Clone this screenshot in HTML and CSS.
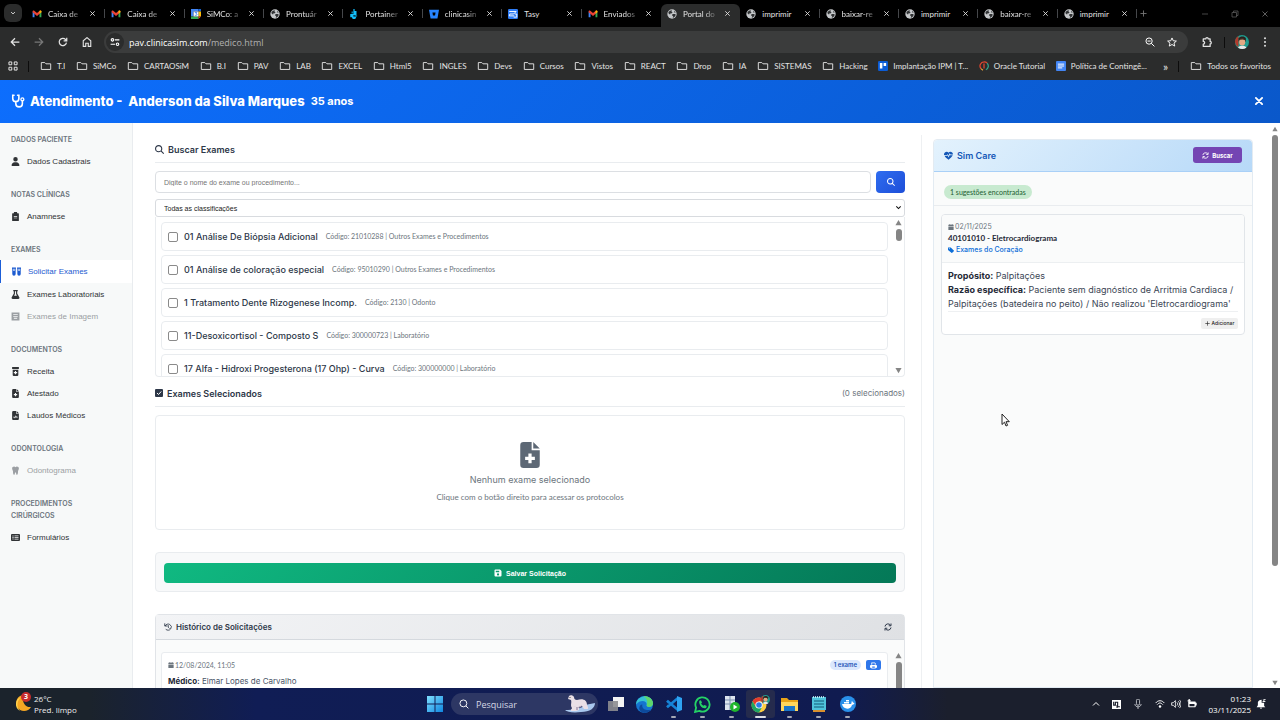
FILE: index.html
```html
<!DOCTYPE html>
<html lang="pt-BR">
<head>
<meta charset="utf-8">
<meta name="viewport" content="width=device-width, initial-scale=1">
<title>Portal do Médico</title>
<link rel="stylesheet" href="styles.css">
</head>
<body>
<svg class="sprite" aria-hidden="true">
  <symbol id="i-gmail" viewBox="0 0 16 16"><path fill="#4285f4" d="M1 4v9h3V7z"/><path fill="#34a853" d="M12 7v6h3V4z"/><path fill="#ea4335" d="M1 3.500C1 2 3 2 4 3l4 3.500L12 3c1-1 3-1 3 .5V5l-7 6-7-6z"/><path fill="#fbbc04" d="M12 3c1-1 3-1 3 .5V5l-3 2.500z"/></symbol>
  <symbol id="i-calendar-app" viewBox="0 0 16 16"><path fill="#4285f4" d="M0 0h12v4H4v8H0z"/><path fill="#1967d2" d="M12 0h4v4h-4z"/><path fill="#fbbc04" d="M12 4h4v8h-4z"/><path fill="#34a853" d="M0 12h12v4H0z"/><path fill="#ea4335" d="M12 12h4l-4 4z"/><path fill="#fff" d="M4 4h8v8H4z"/><path fill="none" stroke="#4285f4" stroke-width="1.500" d="M6 5.500h3.500L8 7.500c3 0 2 3.500-2 2.500"/></symbol>
  <symbol id="i-globe" viewBox="0 0 16 16"><circle cx="8" cy="8" r="7.500" fill="#c4c7c9"/><path fill="#303234" d="M2 6.500C3 3.500 5 2 8 2L7 4l2 1-2 2-2 0 0 2zM9 14l1-2-2-2 1-2 4 0 1 1c-.5 2.500-2.500 4.500-5 5zM12 3l2 3-3-1z"/></symbol>
  <symbol id="i-portainer" viewBox="0 0 16 16"><path fill="#13bef9" d="M7 0h2v3h3v7H7zM2 8h5v5H2zM4 12h8l-2 4H6z"/><path fill="#0a7ea6" d="M4 4h3v3H4zM9 10h4v2H9z"/></symbol>
  <symbol id="i-bitbucket" viewBox="0 0 16 16"><path fill="#2684ff" fill-rule="evenodd" d="M0 1h16l-2.500 14h-11zM5.500 5.500l.8 5h3.400l.8-5z"/></symbol>
  <symbol id="i-tasy" viewBox="0 0 16 16"><rect width="16" height="16" rx="2" fill="#2f7df6"/><path fill="none" stroke="#fff" stroke-width="1.500" d="M2 4h11L9 8H3l-1 3h8M9 13h5V8h-3"/></symbol>
  <symbol id="i-x" viewBox="0 0 16 16"><path fill="none" stroke="currentColor" stroke-width="2" d="M3 3l10 10M13 3L3 13"/></symbol>
  <symbol id="i-xb" viewBox="0 0 16 16"><path fill="none" stroke="currentColor" stroke-width="3" stroke-linecap="round" d="M3 3l10 10M13 3L3 13"/></symbol>
  <symbol id="i-chev" viewBox="0 0 16 16"><path fill="none" stroke="currentColor" stroke-width="2.500" d="M3 5.500l5 5 5-5"/></symbol>
  <symbol id="i-plus" viewBox="0 0 16 16"><path fill="none" stroke="currentColor" stroke-width="2" d="M8 1v14M1 8h14"/></symbol>
  <symbol id="i-min" viewBox="0 0 16 16"><path stroke="currentColor" stroke-width="1.500" d="M2 8h12"/></symbol>
  <symbol id="i-restore" viewBox="0 0 16 16"><path fill="none" stroke="currentColor" stroke-width="1.500" d="M2 5h9v9H2zM5 5V2h9v9h-3"/></symbol>
  <symbol id="i-left" viewBox="0 0 16 16"><path fill="none" stroke="currentColor" stroke-width="2" d="M15 8H2M8 2L2 8l6 6"/></symbol>
  <symbol id="i-right" viewBox="0 0 16 16"><path fill="none" stroke="currentColor" stroke-width="2" d="M1 8h13M8 2l6 6-6 6"/></symbol>
  <symbol id="i-reload" viewBox="0 0 16 16"><path fill="none" stroke="currentColor" stroke-width="2" d="M13.500 9A5.800 5.800 0 1 1 12 4l2 2M14 1v5H9"/></symbol>
  <symbol id="i-home" viewBox="0 0 16 16"><path fill="none" stroke="currentColor" stroke-width="1.800" d="M2 15V6l6-5 6 5v9h-4v-5H6v5z"/></symbol>
  <symbol id="i-tune" viewBox="0 0 16 16"><g fill="none" stroke="currentColor" stroke-width="1.800"><circle cx="4" cy="4.500" r="2"/><path d="M8 4.500h7M1 11.500h7"/><circle cx="12" cy="11.500" r="2"/></g></symbol>
  <symbol id="i-zoomout" viewBox="0 0 16 16"><path fill="none" stroke="currentColor" stroke-width="1.600" d="M10 10l5 5M4 6.500h5"/><circle cx="6.500" cy="6.500" r="5" fill="none" stroke="currentColor" stroke-width="1.600"/></symbol>
  <symbol id="i-star" viewBox="0 0 16 16"><path fill="none" stroke="currentColor" stroke-width="1.500" stroke-linejoin="round" d="M8 1.500l2 4.500 5 .5-3.800 3.300 1.200 4.700L8 12l-4.400 2.500 1.200-4.700L1 6.500 6 6z"/></symbol>
  <symbol id="i-puzzle" viewBox="0 0 16 16"><path fill="none" stroke="currentColor" stroke-width="2" stroke-linejoin="round" d="M2 3h4c0-2.500 4-2.500 4 0h3v4c2.500 0 2.500 4 0 4v4H2v-3.500c3 0 3-4.500 0-4.500z"/></symbol>
  <symbol id="i-face" viewBox="0 0 16 16"><circle cx="8" cy="8" r="8" fill="#1f9c8f"/><path fill="#b13a2c" d="M0 8a8 8 0 0 1 4-6.900V14A8 8 0 0 1 0 8z"/><path fill="#2b211d" d="M4 7V4c2-3 7-3 8.500 0l-.5 4z"/><ellipse cx="8.200" cy="8" rx="3.500" ry="4" fill="#e3a883"/><path fill="#2b211d" d="M4.500 5.500C6 3 11 3 12 6L9 5z"/><path fill="#e8e8e8" d="M3.500 14.500c1-3 8.500-3 9.500 0-3 2-6.500 2-9.500 0z"/></symbol>
  <symbol id="i-dots" viewBox="0 0 16 16"><g fill="currentColor"><circle cx="8" cy="2" r="1.600"/><circle cx="8" cy="8" r="1.600"/><circle cx="8" cy="14" r="1.600"/></g></symbol>
  <symbol id="i-apps" viewBox="0 0 16 16"><path fill="none" stroke="currentColor" stroke-width="1.600" d="M1.500 1.500h4.500v4.500H1.500zM10 1.500h4.500v4.500H10zM1.500 10h4.500v4.500H1.500zM10 10h4.500v4.500H10z"/></symbol>
  <symbol id="i-folder" viewBox="0 0 18 16"><path fill="none" stroke="currentColor" stroke-width="1.500" stroke-linejoin="round" d="M1.500 2.500H7l2 2h7.500v9h-15z"/></symbol>
  <symbol id="i-trello" viewBox="0 0 16 16"><rect width="16" height="16" rx="2" fill="#0b5cd6"/><path fill="#fff" d="M3 3h4v9H3zM9 3h4v5H9z"/></symbol>
  <symbol id="i-oracle" viewBox="0 0 16 16"><g fill="none" stroke-width="2"><path stroke="#e0452f" d="M3 12A6.500 6.500 0 0 1 8 1.500a6.500 6.500 0 0 1 5 2"/><path stroke="#2fa58c" d="M13 3.500a6.500 6.500 0 0 1-2 10.500"/><path stroke="#e8a33a" d="M3 12c1 1.500 2 2 3.500 2.500"/><path stroke="#e0452f" d="M8 4v8"/></g></symbol>
  <symbol id="i-doc" viewBox="0 0 16 16"><rect width="16" height="16" rx="1.500" fill="#4285f4"/><path stroke="#fff" stroke-width="1.600" d="M3 5h10M3 8h10M3 11h7"/></symbol>

  <symbol id="i-steth" viewBox="0 0 16 16"><path fill="none" stroke="currentColor" stroke-width="1.800" stroke-linecap="round" d="M3.500 1.500H2V5c0 5 7 5 7 0V1.500H7.500M5.500 9v2c0 5 7.500 5 7.500 0V8"/><circle cx="13" cy="6.200" r="1.700" fill="none" stroke="currentColor" stroke-width="1.500"/></symbol>
  <symbol id="i-user" viewBox="0 0 448 512"><path fill="currentColor" d="M224 256A128 128 0 1 0 224 0a128 128 0 1 0 0 256zm-45.700 48C79.800 304 0 383.800 0 482.300C0 498.700 13.300 512 29.700 512H418.300c16.400 0 29.700-13.300 29.700-29.700C448 383.800 368.200 304 269.700 304H178.300z"/></symbol>
  <symbol id="i-clip" viewBox="0 0 16 16"><path fill="currentColor" fill-rule="evenodd" d="M5 2a3 3 0 0 1 6 0h2q1 0 1 1v12q0 1-1 1H3q-1 0-1-1V3q0-1 1-1zM5 7v1.300h6V7zM5 10v1.300h6V10z"/></symbol>
  <symbol id="i-vials" viewBox="0 0 16 16"><path fill="currentColor" fill-rule="evenodd" d="M0 1h7v2H6.500v9.500a3 3 0 0 1-6 0V3H0zM2.500 3v4h2V3zM9 1h7v2h-.5v9.500a3 3 0 0 1-6 0V3H9zM11.500 3v4h2V3z"/></symbol>
  <symbol id="i-flask" viewBox="0 0 16 16"><path fill="currentColor" fill-rule="evenodd" d="M4 0h8v2h-1v4l4 7.500Q15.500 16 13 16H3Q.5 16 1 13.500L5 6V2H4zM7 2v5l-1.500 3h5L9 7V2z"/></symbol>
  <symbol id="i-xray" viewBox="0 0 16 16"><path fill="currentColor" fill-rule="evenodd" d="M1 1h14v14H1zM4 4v1.300h8V4zM4 7v1.300h8V7zM5 10v2h6v-2z"/></symbol>
  <symbol id="i-bottle" viewBox="0 0 16 16"><path fill="currentColor" fill-rule="evenodd" d="M2 0h12v3.500H2zM3 5h10v9q0 2-2 2H5q-2 0-2-2zM7 7v2H5v2h2v2h2v-2h2V9H9V7z"/></symbol>
  <symbol id="i-filemed" viewBox="0 0 12 16"><path fill="currentColor" fill-rule="evenodd" d="M2 0h5v5h5v9q0 2-2 2H2q-2 0-2-2V2Q0 0 2 0zM8 0l4 4H8zM5 7v2H3v2h2v2h2v-2h2V9H7V7z"/></symbol>
  <symbol id="i-filewave" viewBox="0 0 12 16"><path fill="currentColor" fill-rule="evenodd" d="M2 0h5v5h5v9q0 2-2 2H2q-2 0-2-2V2Q0 0 2 0zM8 0l4 4H8zM2 10v1.500h2l1 2 1.500-3 .5 1h3V10H8L6.500 7.500 5 11l-.5-1z"/></symbol>
  <symbol id="i-tooth" viewBox="0 0 16 16"><path fill="currentColor" d="M8 2c2-2 6-1 6 2.500 0 2-1.500 3.500-1.500 5 0 3-.5 6.500-2 6.500S9.500 11 8 11s-1 5-2.500 5-2-3.500-2-6.500c0-1.500-1.500-3-1.500-5C2 1 6 0 8 2z"/></symbol>
  <symbol id="i-form" viewBox="0 0 18 16"><path fill="currentColor" fill-rule="evenodd" d="M2 1h14q2 0 2 2v10q0 2-2 2H2q-2 0-2-2V3q0-2 2-2zM3 4v2h2V4zM7 4v1.500h8V4zM3 7v2h2V7zM7 7.300v1.500h8V7.300zM3 10v2h2v-2zM7 10.500V12h8v-1.500z"/></symbol>
  <symbol id="i-search" viewBox="0 0 512 512"><path fill="currentColor" d="M416 208c0 45.900-14.900 88.300-40 122.700L502.600 457.400c12.500 12.500 12.500 32.800 0 45.300s-32.800 12.500-45.300 0L330.700 376c-34.400 25.200-76.800 40-122.700 40C93.100 416 0 322.900 0 208S93.100 0 208 0S416 93.100 416 208zM208 352a144 144 0 1 0 0-288 144 144 0 1 0 0 288z"/></symbol>
  <symbol id="i-check" viewBox="0 0 16 16"><rect width="16" height="16" rx="2" fill="currentColor"/><path fill="none" stroke="#fff" stroke-width="2" stroke-linecap="round" stroke-linejoin="round" d="M4.500 8.500L7 11l5-5.500"/></symbol>
  <symbol id="i-save" viewBox="0 0 16 16"><path fill="currentColor" fill-rule="evenodd" d="M3 1h9l3 3v9q0 2-2 2H3q-2 0-2-2V3q0-2 2-2zM3.500 3.500v3h7v-3zM8 8.500a2.200 2.200 0 1 0 .1 0z"/></symbol>
  <symbol id="i-history" viewBox="0 0 16 16"><path fill="none" stroke="currentColor" stroke-width="1.700" stroke-linecap="round" d="M2.500 5.500A6.300 6.300 0 1 1 4 13M1.500 1.500v4.500H6M8.500 5v3.500l2 2"/></symbol>
  <symbol id="i-sync" viewBox="0 0 16 16"><path fill="none" stroke="currentColor" stroke-width="2" d="M2 7a6 6 0 0 1 11-2.500M14 9A6 6 0 0 1 3 11.500M14 1v4.500H9.500M2 15v-4.500h4.500"/></symbol>
  <symbol id="i-heart" viewBox="0 0 16 16"><path fill="currentColor" d="M8 3c2-3 8-2 8 3H11.500L10 4 8 8.500 6.500 5.500 5.500 7H0C-.500 1 6-.500 8 3zM1 8.500h5.200l.4-.8L8 11.500 10.300 7l.5.700H15.500C14 11 10.500 13.500 8 15.500 5.500 13.500 2.300 11.500 1 8.500z"/></symbol>
  <symbol id="i-cal" viewBox="0 0 14 16"><path fill="currentColor" d="M3 0h2v2h4V0h2v2h3v3.500H0V2h3zM0 6.500h14V16H0z"/></symbol>
  <symbol id="i-tag" viewBox="0 0 16 16"><path fill="currentColor" fill-rule="evenodd" d="M0 1h7.500L15.500 9q1 1 0 2l-4.300 4.500q-1 1-2 0L0 8zM3.500 3a1.300 1.300 0 1 0 .1 0z"/></symbol>
  <symbol id="i-print" viewBox="0 0 16 16"><path fill="currentColor" fill-rule="evenodd" d="M3 1h8l2 2v3h-2V3H5v3H3zM2 7h12q2 0 2 2v4h-3v2H3v-2H0V9q0-2 2-2zM5 10.500V13h6v-2.500z"/></symbol>
  <symbol id="i-up" viewBox="0 0 16 16"><path fill="currentColor" d="M8 2l7 12H1z"/></symbol>
  <symbol id="i-down" viewBox="0 0 16 16"><path fill="currentColor" d="M8 14L1 2h14z"/></symbol>
</svg>

<header class="browser">
  <div class="tabstrip">
    <button class="tabsearch" aria-label="Pesquisar guias"><svg class="ic s6"><use href="#i-chev"/></svg></button>
    <div class="tabs">
      <div class="tab"><svg class="ic s10"><use href="#i-gmail"/></svg><span class="fade">Caixa de</span><svg class="ic s7"><use href="#i-x"/></svg></div>
      <div class="tab"><svg class="ic s10"><use href="#i-gmail"/></svg><span class="fade">Caixa de</span><svg class="ic s7"><use href="#i-x"/></svg></div>
      <div class="tab"><svg class="ic s10"><use href="#i-calendar-app"/></svg><span class="fade">SiMCo: a</span><svg class="ic s7"><use href="#i-x"/></svg></div>
      <div class="tab"><svg class="ic s10"><use href="#i-globe"/></svg><span class="fade">Prontuár</span><svg class="ic s7"><use href="#i-x"/></svg></div>
      <div class="tab"><svg class="ic s10"><use href="#i-portainer"/></svg><span class="fade">Portainer</span><svg class="ic s7"><use href="#i-x"/></svg></div>
      <div class="tab"><svg class="ic s10"><use href="#i-bitbucket"/></svg><span class="fade">clinicasin</span><svg class="ic s7"><use href="#i-x"/></svg></div>
      <div class="tab"><svg class="ic s10"><use href="#i-tasy"/></svg><span>Tasy</span><svg class="ic s7"><use href="#i-x"/></svg></div>
      <div class="tab nosep"><svg class="ic s10"><use href="#i-gmail"/></svg><span class="fade">Enviados</span><svg class="ic s7"><use href="#i-x"/></svg></div>
      <div class="tab active nosep"><svg class="ic s10"><use href="#i-globe"/></svg><span class="fade">Portal do</span><svg class="ic s7"><use href="#i-x"/></svg></div>
      <div class="tab"><svg class="ic s10"><use href="#i-globe"/></svg><span>imprimir</span><svg class="ic s7"><use href="#i-x"/></svg></div>
      <div class="tab"><svg class="ic s10"><use href="#i-globe"/></svg><span class="fade">baixar-re</span><svg class="ic s7"><use href="#i-x"/></svg></div>
      <div class="tab"><svg class="ic s10"><use href="#i-globe"/></svg><span>imprimir</span><svg class="ic s7"><use href="#i-x"/></svg></div>
      <div class="tab"><svg class="ic s10"><use href="#i-globe"/></svg><span class="fade">baixar-re</span><svg class="ic s7"><use href="#i-x"/></svg></div>
      <div class="tab"><svg class="ic s10"><use href="#i-globe"/></svg><span>imprimir</span><svg class="ic s7"><use href="#i-x"/></svg></div>
    </div>
    <div class="winbtns"><svg class="ic s7"><use href="#i-plus"/></svg><div><svg class="ic s8"><use href="#i-min"/></svg><svg class="ic s8"><use href="#i-restore"/></svg><svg class="ic s8"><use href="#i-x"/></svg></div></div>
  </div>
  <div class="toolbar">
    <div class="navbtns"><svg class="ic s10"><use href="#i-left"/></svg><svg class="ic s10 dim"><use href="#i-right"/></svg><svg class="ic s10"><use href="#i-reload"/></svg><svg class="ic s10"><use href="#i-home"/></svg></div>
    <div class="omnibox"><span class="tune"><svg class="ic s10"><use href="#i-tune"/></svg></span><span class="url">pav.clinicasim.com<i>/medico.html</i></span><svg class="ic s10"><use href="#i-zoomout"/></svg><svg class="ic s10"><use href="#i-star"/></svg></div>
    <div class="toolend"><svg class="ic s12"><use href="#i-puzzle"/></svg><b class="vsep"></b><svg class="ic s14"><use href="#i-face"/></svg><svg class="ic s10"><use href="#i-dots"/></svg></div>
  </div>
  <nav class="bookmarks">
    <svg class="ic s10"><use href="#i-apps"/></svg><b class="vsep"></b>
    <div class="marks">
      <a href="#"><svg class="ic s12"><use href="#i-folder"/></svg>T.I</a>
      <a href="#"><svg class="ic s12"><use href="#i-folder"/></svg>SiMCo</a>
      <a href="#"><svg class="ic s12"><use href="#i-folder"/></svg>CARTAOSiM</a>
      <a href="#"><svg class="ic s12"><use href="#i-folder"/></svg>B.I</a>
      <a href="#"><svg class="ic s12"><use href="#i-folder"/></svg>PAV</a>
      <a href="#"><svg class="ic s12"><use href="#i-folder"/></svg>LAB</a>
      <a href="#"><svg class="ic s12"><use href="#i-folder"/></svg>EXCEL</a>
      <a href="#"><svg class="ic s12"><use href="#i-folder"/></svg>Html5</a>
      <a href="#"><svg class="ic s12"><use href="#i-folder"/></svg>INGLES</a>
      <a href="#"><svg class="ic s12"><use href="#i-folder"/></svg>Devs</a>
      <a href="#"><svg class="ic s12"><use href="#i-folder"/></svg>Cursos</a>
      <a href="#"><svg class="ic s12"><use href="#i-folder"/></svg>Vistos</a>
      <a href="#"><svg class="ic s12"><use href="#i-folder"/></svg>REACT</a>
      <a href="#"><svg class="ic s12"><use href="#i-folder"/></svg>Drop</a>
      <a href="#"><svg class="ic s12"><use href="#i-folder"/></svg>IA</a>
      <a href="#"><svg class="ic s12"><use href="#i-folder"/></svg>SISTEMAS</a>
      <a href="#"><svg class="ic s12"><use href="#i-folder"/></svg>Hacking</a>
      <a href="#"><svg class="ic s10"><use href="#i-trello"/></svg>Implantação IPM | T...</a>
      <a href="#"><svg class="ic s10"><use href="#i-oracle"/></svg>Oracle Tutorial</a>
      <a href="#"><svg class="ic s10"><use href="#i-doc"/></svg>Política de Contingê...</a>
    </div>
    <span class="more">»</span><b class="vsep"></b>
    <a href="#"><svg class="ic s12"><use href="#i-folder"/></svg>Todos os favoritos</a>
  </nav>
</header>

<div class="app">
  <header class="appbar">
    <svg class="ic s14"><use href="#i-steth"/></svg>
    <h1>Atendimento - &nbsp;Anderson da Silva Marques</h1><span class="age">35 anos</span>
    <button class="close" aria-label="Fechar"><svg class="ic s10"><use href="#i-xb"/></svg></button>
  </header>
  <div class="body">
    <nav class="side">
      <section><h2>DADOS PACIENTE</h2>
        <a href="#"><svg class="ic s9"><use href="#i-user"/></svg>Dados Cadastrais</a></section>
      <section><h2>NOTAS CLÍNICAS</h2>
        <a href="#"><svg class="ic s9"><use href="#i-clip"/></svg>Anamnese</a></section>
      <section><h2>EXAMES</h2>
        <a href="#" class="on"><svg class="ic s9"><use href="#i-vials"/></svg>Solicitar Exames</a>
        <a href="#"><svg class="ic s9"><use href="#i-flask"/></svg>Exames Laboratoriais</a>
        <a href="#" class="off"><svg class="ic s9"><use href="#i-xray"/></svg>Exames de Imagem</a></section>
      <section><h2>DOCUMENTOS</h2>
        <a href="#"><svg class="ic s9"><use href="#i-bottle"/></svg>Receita</a>
        <a href="#"><svg class="ic s9"><use href="#i-filemed"/></svg>Atestado</a>
        <a href="#"><svg class="ic s9"><use href="#i-filewave"/></svg>Laudos Médicos</a></section>
      <section><h2>ODONTOLOGIA</h2>
        <a href="#" class="off"><svg class="ic s9"><use href="#i-tooth"/></svg>Odontograma</a></section>
      <section><h2>PROCEDIMENTOS<br>CIRÚRGICOS</h2>
        <a href="#"><svg class="ic s9"><use href="#i-form"/></svg>Formulários</a></section>
    </nav>

    <main class="main">
      <div class="sechead"><h3><svg class="ic s9"><use href="#i-search"/></svg>Buscar Exames</h3></div>
      <form class="searchrow">
        <input type="text" aria-label="Nome do exame ou procedimento" placeholder="Digite o nome do exame ou procedimento...">
        <button type="button" aria-label="Pesquisar"><svg class="ic s8"><use href="#i-search"/></svg></button>
      </form>
      <div class="selwrap">
        <select aria-label="Classificação"><option>Todas as classificações</option></select>
        <svg class="ic s7"><use href="#i-chev"/></svg>
      </div>
      <div class="results">
        <div class="rows">
          <label><input type="checkbox"><span>01 Análise De Biópsia Adicional</span><small>Código: 21010288 | Outros Exames e Procedimentos</small></label>
          <label><input type="checkbox"><span>01 Análise de coloração especial</span><small>Código: 95010290 | Outros Exames e Procedimentos</small></label>
          <label><input type="checkbox"><span>1 Tratamento Dente Rizogenese Incomp.</span><small>Código: 2130 | Odonto</small></label>
          <label><input type="checkbox"><span>11-Desoxicortisol - Composto S</span><small>Código: 300000723 | Laboratório</small></label>
          <label><input type="checkbox"><span>17 Alfa - Hidroxi Progesterona (17 Ohp) - Curva</span><small>Código: 300000000 | Laboratório</small></label>
        </div>
        <div class="rail"><svg class="ic s7"><use href="#i-up"/></svg><b class="thumb short"></b><svg class="ic s7"><use href="#i-down"/></svg></div>
      </div>
      <div class="sechead selected"><h3><svg class="ic s8"><use href="#i-check"/></svg>Exames Selecionados</h3><span>(0 selecionados)</span></div>
      <div class="empty">
        <svg class="ic s26"><use href="#i-filemed"/></svg>
        <p>Nenhum exame selecionado</p>
        <small>Clique com o botão direito para acessar os protocolos</small>
      </div>
      <div class="savebox"><button><svg class="ic s8"><use href="#i-save"/></svg>Salvar Solicitação</button></div>
      <section class="history">
        <header><h3><svg class="ic s8"><use href="#i-history"/></svg>Histórico de Solicitações</h3><button aria-label="Atualizar"><svg class="ic s8"><use href="#i-sync"/></svg></button></header>
        <div class="histbody">
          <article>
            <div class="histtop"><span class="date"><svg class="ic s6"><use href="#i-cal"/></svg>12/08/2024, 11:05</span><span class="count">1 exame</span><button aria-label="Imprimir"><svg class="ic s7"><use href="#i-print"/></svg></button></div>
            <p><b>Médico:</b> Elmar Lopes de Carvalho</p>
          </article>
          <div class="rail"><svg class="ic s7"><use href="#i-up"/></svg><b class="thumb"></b></div>
        </div>
      </section>
    </main>

    <div class="carecol">
      <aside class="care">
        <header><h3><svg class="ic s9"><use href="#i-heart"/></svg>Sim Care</h3><button><svg class="ic s7"><use href="#i-sync"/></svg>Buscar</button></header>
        <div class="found"><span>1 sugestões encontradas</span></div>
        <article class="card">
          <div class="cardhead">
            <span class="date"><svg class="ic s6"><use href="#i-cal"/></svg>02/11/2025</span>
            <h4>40101010 - Eletrocardiograma</h4>
            <a href="#"><svg class="ic s6"><use href="#i-tag"/></svg>Exames do Coração</a>
          </div>
          <div class="cardbody">
            <p><b>Propósito:</b> Palpitações</p>
            <p><b>Razão específica:</b> Paciente sem diagnóstico de Arritmia Cardiaca /<br>Palpitações (batedeira no peito) / Não realizou 'Eletrocardiograma'</p>
            <div class="act"><button><svg class="ic s4"><use href="#i-plus"/></svg>Adicionar</button></div>
          </div>
        </article>
      </aside>
    </div>
    <div class="rail page"><svg class="ic s6"><use href="#i-up"/></svg><b class="thumb long"></b><svg class="ic s6"><use href="#i-down"/></svg></div>
  </div>
</div>

<footer class="taskbar">
  <div class="weather">
    <span class="moon"><svg viewBox="0 0 20 20" width="20" height="20"><path fill="#f5a623" d="M12 1A8 8 0 1 0 19 13C13 14 9 7 12 1z"/><path fill="#ffd34e" d="M9 3C3 5 2 14 8 17 4 12 5 7 9 3z"/></svg><b>3</b></span>
    <span>26°C<br>Pred. limpo</span>
  </div>
  <div class="dock">
    <button class="start" aria-label="Iniciar"><svg width="16" height="16" viewBox="0 0 16 16"><defs><linearGradient id="w" x2="1" y2="1"><stop stop-color="#7fe0ff"/><stop offset="1" stop-color="#0f86e0"/></linearGradient></defs><path fill="url(#w)" d="M0 0h7.500v7.500H0zM8.500 0H16v7.500H8.500zM0 8.500h7.500V16H0zM8.500 8.500H16V16H8.500z"/></svg></button>
    <div class="tsearch"><svg class="ic s10" viewBox="0 0 16 16"><circle cx="7" cy="7" r="5.500" fill="none" stroke="#fff" stroke-width="1.500"/><path d="M11 11l4 4" stroke="#fff" stroke-width="1.500"/></svg><span>Pesquisar</span>
      <svg width="32" height="18" viewBox="0 0 32 18"><path fill="#a9c8ee" d="M1 15c8 0 16-1 20-5l10-2c0 5-5 9-14 9C9 18 3 17 1 15z"/><path fill="#e9dfe6" d="M5 1c1-1 4-1 5 1 0 2 1 3 3 3 6-2 10 0 10 5 1 2 2 4 0 4h-3l-2-3-3 1v3l-3 1H7c-1-1 1-2 1-3-2-3 0-5-1-8L4 4z"/><path fill="#b6a9bd" d="M9 11c3 2 7 1 9-1l-1 2-3 1v2h-2v-3z"/><circle cx="6" cy="2.500" r=".6" fill="#333"/></svg></div>
    <button class="app-ico" aria-label="Visão de tarefas"><svg width="16" height="14" viewBox="0 0 16 14"><path fill="#f3f3f3" d="M5 0h11v10H5z"/><path fill="#8d8d90" d="M0 4h10v10H0z" opacity=".9"/></svg></button>
    <button class="app-ico" aria-label="Edge"><svg width="17" height="17" viewBox="0 0 16 16"><circle cx="8" cy="8" r="8" fill="#1574cf"/><path fill="#35c1d3" d="M0 8C0-2 16-2 16 7c0 4-6 4-6 2C11 4 4 3 0 8z"/><path fill="#5fd66b" d="M7 .1C12 0 16 3 16 7c0 4-6 4-6 2 1-3 1-6-3-8.900z"/><path fill="#0d4a9c" d="M6 8c-1 4 3 6 8 5-3 4-10 4-11-1 0-2 1-4 3-4z"/></svg></button>
    <button class="app-ico run" aria-label="VS Code"><svg width="16" height="16" viewBox="0 0 16 16"><path fill="none" stroke="#1684d8" stroke-width="2.500" d="M12 2L2 10.500 1 9.500M1 6.500L2 5.500 12 14"/><path fill="#2ea3f2" d="M11 0l5 2v12l-5 2z"/></svg></button>
    <button class="app-ico run" aria-label="WhatsApp"><svg width="17" height="17" viewBox="0 0 16 16"><path fill="none" stroke="#25d366" stroke-width="1.700" d="M1 15l1-4a6.700 6.700 0 1 1 3 3z"/><path fill="#25d366" d="M5 4.500l1.500-.5 1 2-.8 1.200 2 2L10 8.500l2 1-.5 1.600C9 13 4 9 5 4.500z"/></svg></button>
    <button class="app-ico run" aria-label="Servidor"><svg width="16" height="16" viewBox="0 0 16 16"><path fill="#dce4ee" d="M1 0h10v14H1z"/><path stroke="#7b8fb0" d="M1 4h10M1 8h10M6 0v14"/><circle cx="11" cy="11" r="5" fill="#1fb62c"/><path fill="#fff" d="M9.500 8.500l4 2.500-4 2.500z"/></svg></button>
    <button class="app-ico run cur" aria-label="Chrome"><svg width="20" height="18" viewBox="0 0 20 18"><circle cx="8" cy="10" r="7.500" fill="#ffcd40"/><path fill="#e33b2e" d="M1.500 6.200a7.500 7.500 0 0 1 13 0H8L5 11.500z"/><path fill="#1fa463" d="M1.500 6.200L5 12l6.200 0L8 17.500A7.500 7.500 0 0 1 1.500 6.200z"/><circle cx="8" cy="10" r="3.600" fill="#fff"/><circle cx="8" cy="10" r="2.800" fill="#2c7be5"/><use href="#i-face" x="10" y="0" width="9" height="9"/></svg></button>
    <button class="app-ico run" aria-label="Explorador"><svg width="17" height="15" viewBox="0 0 17 15"><path fill="#e8a317" d="M0 1h6l2 2h9v11H0z"/><path fill="#ffd65c" d="M0 5h17v9H0z"/><path fill="#1b76c9" d="M3 9h11v5H3z"/></svg></button>
    <button class="app-ico run" aria-label="Bloco de notas"><svg width="14" height="16" viewBox="0 0 14 16"><path fill="#4fc3dc" d="M0 1h14v13H0z"/><path fill="#d9902f" d="M1 14h12v2H1z"/><path stroke="#125a77" stroke-width="1.200" d="M2 5h10M2 8h10M2 11h10"/><path stroke="#dff" stroke-width="1.500" stroke-dasharray="1 1" d="M1 1h12"/></svg></button>
    <button class="app-ico run" aria-label="Docker"><svg width="16" height="16" viewBox="0 0 16 16"><circle cx="8" cy="8" r="8" fill="#2a90ea"/><path fill="#fff" d="M2 8h9c1-1 0-2 1-3 1 1 1 2 2.500 2-.5 1.500-2 1.500-2.500 2-1 5-9 5-10-1zM4 6h5v1.500H4zM6 4h3v1.500H6z"/></svg></button>
  </div>
  <div class="tray">
    <svg class="ic s8" viewBox="0 0 16 16"><path fill="none" stroke="#fff" stroke-width="2" d="M2 11l6-6 6 6"/></svg>
    <svg class="ic s9" viewBox="0 0 16 16"><path fill="#fff" d="M0 0h16v16H0z"/><path fill="none" stroke="#1b1f2d" stroke-width="2" d="M3 3v6h3V4h4v8h4M9 14V9"/></svg>
    <svg class="ic s10" viewBox="0 0 16 16"><rect x="5.500" y="0" width="5" height="10" rx="2.500" fill="none" stroke="#d5d7dc" stroke-width="1.300"/><path fill="none" stroke="#d5d7dc" stroke-width="1.300" d="M3 8c0 6 10 6 10 0M8 12.500V16"/></svg>
    <div class="sys">
      <svg class="ic s10" viewBox="0 0 16 16"><g fill="none" stroke="#fff" stroke-width="1.500"><path d="M1 6.500c4-5 10-5 14 0M3.500 9c3-3.500 6-3.500 9 0"/></g><circle cx="8" cy="12" r="2" fill="#fff"/></svg>
      <svg class="ic s10" viewBox="0 0 16 16"><g fill="none" stroke="#fff" stroke-width="1.300"><path d="M1 6v4h2.500L7 13.500v-11L3.500 6zM9.500 5.500c1.500 1.500 1.500 3.500 0 5M11.500 3.500c3 3 3 6 0 9M13.500 1.500c3.500 4 3.500 9 0 13"/></g></svg>
      <svg class="ic s10" viewBox="0 0 16 16"><path fill="#fff" fill-rule="evenodd" d="M3 4h10q1 0 1 1v1h1.500v4.500H14V12q0 1-1 1H3q-1 0-1-1V5q0-1 1-1zM4 8v3.500h8V8z"/><path stroke="#fff" stroke-width="2" d="M3.500 0v6M1 3h5"/></svg>
    </div>
    <span class="clock">01:23<br>03/11/2025</span>
    <svg class="ic s10" viewBox="0 0 16 16"><path fill="#fff" d="M3 5q1-4 6-4v5h4v5l2 2H1l2-3zM6 14h4q-2 3-4 0z"/><path fill="none" stroke="#fff" stroke-width="1.500" d="M11 0h4l-4 4h4"/></svg>
  </div>
</footer>
<svg class="cursor" width="9" height="14" viewBox="0 0 9 14"><path fill="#fff" stroke="#222" d="M1 1v10.500l2.500-2.300L5 13l1.600-.7L5 8.700h3.300z"/></svg>
</body>
</html>
```

FILE: styles.css
```css
* { box-sizing: border-box; }
html, body { height: 100%; margin: 0; }
body {
  display: flex; flex-direction: column; overflow: hidden;
  font-family: Inter, "Open Sans", sans-serif; font-size: 8px; color: #2d3748; background: #fff;
}
h1, h2, h3, h4, p { margin: 0; }
a { color: inherit; text-decoration: none; }
button { font: inherit; color: inherit; border: 0; padding: 0; background: none; display: flex; align-items: center; justify-content: center; }
.sprite { position: absolute; width: 0; height: 0; }
.ic { flex: none; display: block; }
.s4 { width: 5px; height: 5px; }
.s6 { width: 6px; height: 6px; }
.s7 { width: 7px; height: 7px; }
.s8 { width: 8px; height: 8px; }
.s9 { width: 9px; height: 9px; }
.s10 { width: 10px; height: 10px; }
.s12 { width: 12px; height: 10px; }
.s14 { width: 14px; height: 14px; }
.s26 { width: 20px; height: 26px; }

/* browser frame */
.browser { flex: none; background: #2b2c2c; color: #e3e3e3; font-family: Lato, "Open Sans", sans-serif; }
.tabstrip { height: 27px; display: flex; background: #000; }
.tabsearch { width: 18px; height: 18px; margin: 4px; border-radius: 6px; background: #2b2c2c; }
.tabs { flex: 1; display: flex; min-width: 0; }
.tab { flex: 1; min-width: 0; display: flex; align-items: center; padding: 0 9px 0 6px; margin-top: 4px; position: relative; height: 19px; }
.tab span { flex: 1; margin: 0 3px 0 6px; white-space: nowrap; }
.tab .fade { mask-image: linear-gradient(90deg, #000 55%, transparent 95%); }
.tab::after { content: ""; position: absolute; right: 0; top: 5px; width: 1px; height: 9px; background: #45474a; }
.tab.nosep::after { display: none; }
.tab.active { background: #2b2c2c; border-radius: 6px 6px 0 0; height: 23px; padding-bottom: 4px; }
.winbtns { width: 143px; display: flex; align-items: center; justify-content: space-between; padding: 0 11px 0 3px; color: #777; }
.winbtns div { display: flex; gap: 22px; color: #5d5d5d; }
.toolbar { height: 26px; display: flex; align-items: center; padding: 4px 10px 0; }
.navbtns { display: flex; gap: 14px; width: 94px; }
.dim { color: #777; }
.omnibox { flex: 1; height: 22px; border-radius: 11px; background: #3b3c3c; display: flex; align-items: center; gap: 12px; padding: 0 11px 0 2px; font-family: "Open Sans", sans-serif; font-size: 9px; color: #fff; }
.omnibox .tune { width: 18px; height: 18px; border-radius: 9px; background: #2b2c2c; display: grid; place-items: center; }
.omnibox .url { flex: 1; margin-left: -7px; }
.omnibox i { font-style: normal; color: #b0b0b0; }
.toolend { width: 82px; display: flex; align-items: center; justify-content: space-between; padding-left: 13px; }
.vsep { width: 1px; height: 11px; background: #0c0c0c; }
.bookmarks { height: 27px; display: flex; align-items: center; padding: 0 9px 1px 8px; }
.bookmarks a { display: flex; align-items: center; gap: 5px; white-space: nowrap; }
.bookmarks > .vsep { margin: 0 11px 0 10px; }
.marks { flex: 1; display: flex; justify-content: space-between; }
.more { font-size: 12px; margin-left: 16px; }

/* application */
.app { flex: 1; min-height: 0; display: flex; flex-direction: column; }
.appbar { flex: none; height: 43px; display: flex; align-items: center; padding: 0 16px 2px 11px; color: #fff; background: linear-gradient(135deg, #0d6efd, #0a58ca); }
.appbar h1 { font-size: 13px; font-weight: 800; margin: 0 6px 0 5px; }
.age { font-size: 11px; font-weight: 700; }
.close { margin-left: auto; }
.body { flex: 1; min-height: 0; display: flex; overflow: hidden; }
.side { width: 133px; flex: none; background: #f7f9f9; border-right: 1px solid #e9ecef; padding-top: 11px; }
.side section { margin-bottom: 17px; }
.side h2 { font-size: 7px; line-height: 12px; font-weight: 600; color: #6c757d; margin-bottom: 4px; padding-left: 11px; }
.side a { display: flex; align-items: center; gap: 7px; height: 22px; padding-left: 11px; font-family: "Liberation Sans", Arial, sans-serif; color: #303336; }
.side .on { height: 23px; border-left: 1px solid #1d5fd8; background: #fff; color: #1d5bd0; }
.side .off { color: #9b9fa3; }

.main { flex: 1; min-width: 0; padding: 16px 16px 0 22px; display: flex; flex-direction: column; }
.main > * { flex: none; }
.sechead { display: flex; justify-content: space-between; align-items: center; height: 24px; padding-bottom: 3px; border-bottom: 1px solid #e9ecef; margin-bottom: 8px; }
h3 { display: flex; align-items: center; gap: 4px; font-size: 9px; font-weight: 600; }
.sechead span { color: #6c757d; }
.searchrow { display: flex; gap: 5px; height: 22px; }
.searchrow input { flex: 1; min-width: 0; border: 1px solid #dcdfe3; border-radius: 4px; padding: 0 8px; font: 7px "Liberation Sans", Arial, sans-serif; background: #fff; }
.searchrow input::placeholder { color: #757575; }
.searchrow button { width: 29px; border-radius: 4px; background: linear-gradient(135deg, #2f6df0, #1d4ed8); color: #fff; }
.selwrap { position: relative; margin: 6px 0 0; display: flex; }
.selwrap select { flex: 1; height: 18px; appearance: none; border: 1px solid #d8dbdf; border-radius: 3px; padding: 0 8px; background: #fff; color: #222; font: 7px "Liberation Sans", Arial, sans-serif; }
.selwrap svg { position: absolute; right: 3px; top: 5px; color: #111; pointer-events: none; }
.results { height: 160px; overflow: hidden; display: flex; border: 1px solid #e9ecef; border-top: 0; border-radius: 0 0 4px 4px; padding-left: 5px; }
.rows { flex: 1; padding-top: 5px; display: flex; flex-direction: column; gap: 4px; }
.rows label { flex: none; height: 29px; border: 1px solid #e9ecef; border-radius: 4px; display: flex; align-items: center; padding: 0 0 1px 6px; background: #fff; }
.rows input { appearance: none; width: 10px; height: 10px; border: 1px solid #8a8a8a; border-radius: 2px; margin: 1px 6px 0 0; background: #fff; }
.rows span { font-size: 9px; font-weight: 500; }
.rows small { font-family: Lato, sans-serif; font-size: 7px; color: #6c757d; margin-left: 8px; }
.rail { width: 16px; flex: none; display: flex; flex-direction: column; align-items: center; padding: 2px 0; color: #858585; }
.rail > svg:last-child { margin-top: auto; }
.results .rail { padding-left: 5px; }
.thumb { width: 6px; border-radius: 3px; background: #858585; flex: 1; margin-top: 3px; }
.thumb.short { flex: none; height: 12px; }
.selected { margin-top: 6px; }
.empty { height: 115px; border: 1px solid #e9ecef; border-radius: 4px; display: flex; flex-direction: column; align-items: center; padding-top: 26px; color: #6c757d; }
.empty svg { color: #5d6875; }
.empty p { font-size: 9px; line-height: 12px; margin: 6px 0 5px; }
.empty small { font-family: Lato, sans-serif; font-size: 8px; line-height: 12px; }
.savebox { margin: 22px 0; padding: 10px 8px 8px; border: 1px solid #e9ecef; border-radius: 4px; background: #f8f9fa; }
.savebox button { width: 100%; height: 20px; gap: 4px; border-radius: 4px; color: #fff; font: bold 7px "Liberation Sans", Arial, sans-serif; background: linear-gradient(135deg, #10b981, #047857); }
.history { border: 1px solid #e1e4e8; border-radius: 4px 4px 0 0; background: #fafbfb; }
.history header { height: 25px; display: flex; align-items: center; justify-content: space-between; padding: 0 12px 0 8px; border-bottom: 1px solid #d5d9de; background: linear-gradient(135deg, #f3f4f6, #dfe1e4); }
.history h3 { font-size: 8px; }
.histbody { height: 110px; padding: 12px 0 0 5px; display: flex; }
.histbody article { flex: 1; border: 1px solid #e9ecef; border-radius: 3px; background: #fff; padding: 6px; }
.histbody .rail { padding: 0 0 0 5px; }
.histtop { display: flex; align-items: center; height: 12px; margin-bottom: 4px; }
.date { display: flex; align-items: center; gap: 1px; color: #6c757d; font-size: 7px; }
.histtop .date { flex: 1; font-family: Lato, sans-serif; }
.count { font-size: 6px; line-height: 10px; font-weight: 600; color: #2456b8; background: #dbe8fd; border-radius: 5px; padding: 0 4px; margin-right: 5px; }
.histtop button { width: 15px; height: 10px; border-radius: 2px; background: #2f77ea; color: #fff; }
.histbody p { font-size: 8px; line-height: 12px; color: #4a5568; }
b { color: #1f2937; }

.carecol { width: 332px; flex: none; margin-top: 12px; padding: 4px 0 0 11px; border-left: 1px solid #eef0f2; display: flex; }
.care { flex: 1; border: 1px solid #e3ebf2; border-radius: 4px 4px 0 0; background: #fafbfb; }
.care > header { height: 32px; display: flex; align-items: center; justify-content: space-between; padding: 0 10px 1px; border-bottom: 1px solid #a9d0f7; border-radius: 4px 4px 0 0; background: linear-gradient(135deg, #e3f2fd, #b7d9f8); color: #1558b7; }
.care > header button { width: 49px; height: 16px; gap: 3px; border-radius: 3px; background: #7445b3; color: #fff; font-size: 6px; font-weight: 700; }
.found { height: 34px; display: flex; align-items: center; padding: 6px 10px 0; border-bottom: 1px solid #e9ecef; }
.found span { font-family: Lato, sans-serif; font-size: 7px; line-height: 14px; padding: 0 6px; border-radius: 7px; color: #205c31; background: #c8ead0; }
.card { margin: 8px 7px; border: 1px solid #e1e5e9; border-radius: 4px; background: #fff; overflow: hidden; }
.cardhead { background: #fafbfb; padding: 6px; border-bottom: 1px solid #eceff1; height: 48px; line-height: 12px; }
.cardhead h4 { font-family: Lato, sans-serif; font-size: 8px; line-height: 11px; font-weight: 700; color: #1f2937; }
.cardhead a { display: flex; align-items: center; gap: 2px; font-size: 7px; line-height: 12px; color: #0d6ed8; font-weight: 500; }
.cardbody { padding: 6px 6px 5px; font-size: 9px; line-height: 14px; color: #3b4655; }
.cardbody p { white-space: nowrap; }
.act { border-top: 1px solid #eef0f2; padding-top: 6px; display: flex; justify-content: flex-end; }
.act button { width: 37px; height: 11px; gap: 2px; border-radius: 2px; background: #efefef; color: #222; font-size: 5px; line-height: 11px; font-weight: 500; }
.rail.page { width: 10px; margin-left: 17px; padding: 3px 0 2px; }
.thumb.long { flex: 0 0 77%; }

/* taskbar */
.taskbar { flex: none; height: 32px; display: grid; grid-template-columns: 1fr auto 1fr; align-items: center; color: #fff; font-family: "Open Sans", sans-serif; background: linear-gradient(90deg, #1b232c 0, #1b232c 7%, #101d55 20%, #101b50 66%, #1b1f2d 74%, #1b1f2d); }
.weather { display: flex; align-items: center; gap: 2px; padding-left: 12px; line-height: 11px; color: #eee; }
.moon { position: relative; display: block; height: 20px; }
.moon b { position: absolute; right: 1px; top: -2px; width: 10px; height: 10px; border-radius: 5px; background: #c72c2c; color: #fff; font-size: 7px; line-height: 10px; text-align: center; }
.dock { display: flex; align-items: center; padding-left: 4px; }
.start { width: 25px; height: 26px; }
.tsearch { width: 147px; height: 22px; margin: 0 3px 0 4px; border-radius: 11px; background: #2d3764; display: flex; align-items: center; gap: 7px; padding: 0 2px 0 8px; font-size: 9px; color: #d5d8e4; }
.tsearch span { flex: 1; }
.app-ico { width: 29px; height: 28px; position: relative; }
.run::after { content: ""; position: absolute; left: 12px; bottom: 0; width: 5px; height: 2px; border-radius: 1px; background: #a5a8b5; }
.cur { background: #252b4d; border-radius: 3px; }
.run.cur::after { left: 9px; width: 11px; background: #dcdde3; }
.tray { display: flex; align-items: center; justify-content: flex-end; padding-right: 14px; gap: 12px; }
.sys { display: flex; gap: 6px; }
.clock { text-align: right; line-height: 11px; margin-right: -7px; }
.cursor { position: fixed; left: 1001px; top: 413px; }
```
